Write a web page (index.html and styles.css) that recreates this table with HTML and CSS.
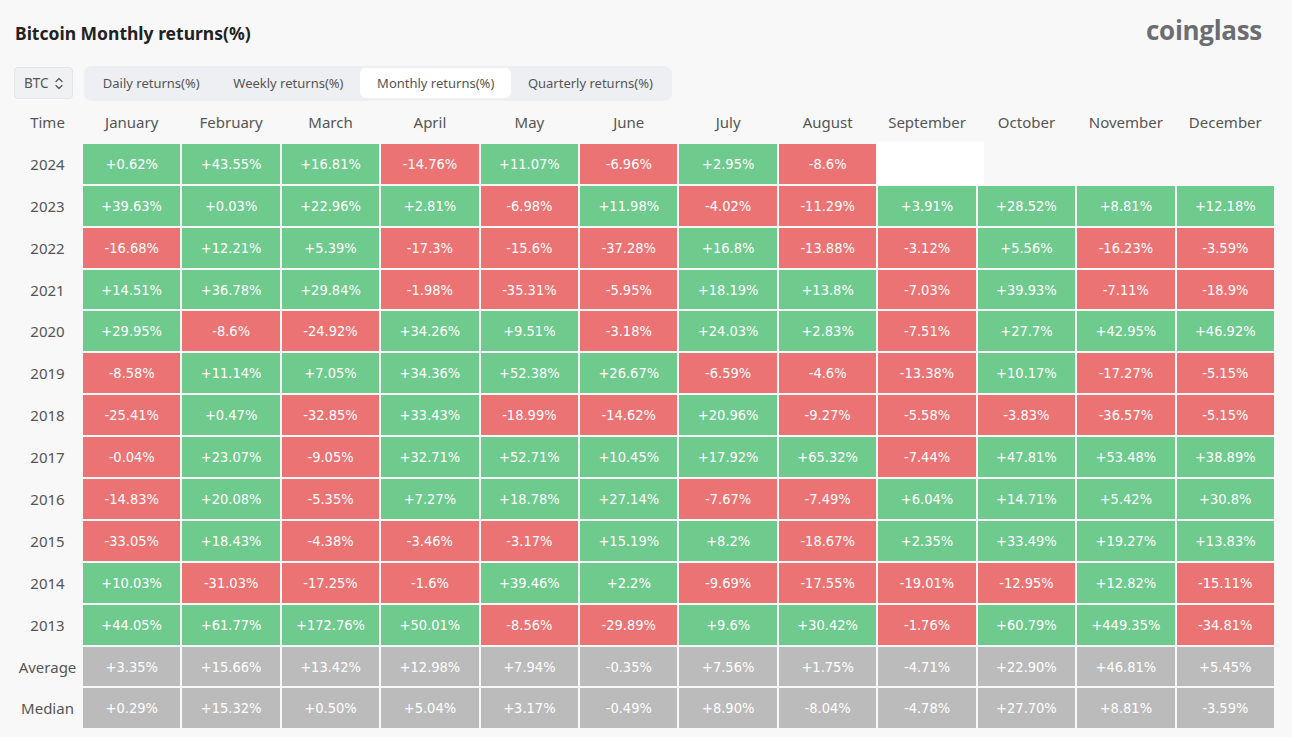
FILE: index.html
```html
<!DOCTYPE html>
<html lang="en">
<head>
<meta charset="utf-8">
<title>Bitcoin Monthly returns(%)</title>
<link rel="stylesheet" href="styles.css">
</head>
<body>
<div class="page">
  <header class="top">
    <h1 class="title">Bitcoin Monthly returns(%)</h1>
    <div class="logo">coinglass</div>
  </header>
  <div class="controls">
    <div class="select">BTC
      <svg class="chev" width="8" height="13" viewBox="0 0 8 13"><path d="M1 4.5 4 1.5 7 4.5M1 8.5 4 11.5 7 8.5" fill="none" stroke="#555" stroke-width="1.2" stroke-linecap="round" stroke-linejoin="round"/></svg>
    </div>
    <div class="tabs">
      <div class="tab">Daily returns(%)</div>
      <div class="tab">Weekly returns(%)</div>
      <div class="tab active">Monthly returns(%)</div>
      <div class="tab">Quarterly returns(%)</div>
    </div>
  </div>
  <div class="grid">
    <div class="hd">Time</div><div class="hd">January</div><div class="hd">February</div><div class="hd">March</div><div class="hd">April</div><div class="hd">May</div><div class="hd">June</div><div class="hd">July</div><div class="hd">August</div><div class="hd">September</div><div class="hd">October</div><div class="hd">November</div><div class="hd">December</div>

    <div class="lbl">2024</div><div class="c up">+0.62%</div><div class="c up">+43.55%</div><div class="c up">+16.81%</div><div class="c dn">-14.76%</div><div class="c up">+11.07%</div><div class="c dn">-6.96%</div><div class="c up">+2.95%</div><div class="c dn">-8.6%</div><div class="c blank"></div><div class="c none"></div><div class="c none"></div><div class="c none"></div>

    <div class="lbl">2023</div><div class="c up">+39.63%</div><div class="c up">+0.03%</div><div class="c up">+22.96%</div><div class="c up">+2.81%</div><div class="c dn">-6.98%</div><div class="c up">+11.98%</div><div class="c dn">-4.02%</div><div class="c dn">-11.29%</div><div class="c up">+3.91%</div><div class="c up">+28.52%</div><div class="c up">+8.81%</div><div class="c up">+12.18%</div>

    <div class="lbl">2022</div><div class="c dn">-16.68%</div><div class="c up">+12.21%</div><div class="c up">+5.39%</div><div class="c dn">-17.3%</div><div class="c dn">-15.6%</div><div class="c dn">-37.28%</div><div class="c up">+16.8%</div><div class="c dn">-13.88%</div><div class="c dn">-3.12%</div><div class="c up">+5.56%</div><div class="c dn">-16.23%</div><div class="c dn">-3.59%</div>

    <div class="lbl">2021</div><div class="c up">+14.51%</div><div class="c up">+36.78%</div><div class="c up">+29.84%</div><div class="c dn">-1.98%</div><div class="c dn">-35.31%</div><div class="c dn">-5.95%</div><div class="c up">+18.19%</div><div class="c up">+13.8%</div><div class="c dn">-7.03%</div><div class="c up">+39.93%</div><div class="c dn">-7.11%</div><div class="c dn">-18.9%</div>

    <div class="lbl">2020</div><div class="c up">+29.95%</div><div class="c dn">-8.6%</div><div class="c dn">-24.92%</div><div class="c up">+34.26%</div><div class="c up">+9.51%</div><div class="c dn">-3.18%</div><div class="c up">+24.03%</div><div class="c up">+2.83%</div><div class="c dn">-7.51%</div><div class="c up">+27.7%</div><div class="c up">+42.95%</div><div class="c up">+46.92%</div>

    <div class="lbl">2019</div><div class="c dn">-8.58%</div><div class="c up">+11.14%</div><div class="c up">+7.05%</div><div class="c up">+34.36%</div><div class="c up">+52.38%</div><div class="c up">+26.67%</div><div class="c dn">-6.59%</div><div class="c dn">-4.6%</div><div class="c dn">-13.38%</div><div class="c up">+10.17%</div><div class="c dn">-17.27%</div><div class="c dn">-5.15%</div>

    <div class="lbl">2018</div><div class="c dn">-25.41%</div><div class="c up">+0.47%</div><div class="c dn">-32.85%</div><div class="c up">+33.43%</div><div class="c dn">-18.99%</div><div class="c dn">-14.62%</div><div class="c up">+20.96%</div><div class="c dn">-9.27%</div><div class="c dn">-5.58%</div><div class="c dn">-3.83%</div><div class="c dn">-36.57%</div><div class="c dn">-5.15%</div>

    <div class="lbl">2017</div><div class="c dn">-0.04%</div><div class="c up">+23.07%</div><div class="c dn">-9.05%</div><div class="c up">+32.71%</div><div class="c up">+52.71%</div><div class="c up">+10.45%</div><div class="c up">+17.92%</div><div class="c up">+65.32%</div><div class="c dn">-7.44%</div><div class="c up">+47.81%</div><div class="c up">+53.48%</div><div class="c up">+38.89%</div>

    <div class="lbl">2016</div><div class="c dn">-14.83%</div><div class="c up">+20.08%</div><div class="c dn">-5.35%</div><div class="c up">+7.27%</div><div class="c up">+18.78%</div><div class="c up">+27.14%</div><div class="c dn">-7.67%</div><div class="c dn">-7.49%</div><div class="c up">+6.04%</div><div class="c up">+14.71%</div><div class="c up">+5.42%</div><div class="c up">+30.8%</div>

    <div class="lbl">2015</div><div class="c dn">-33.05%</div><div class="c up">+18.43%</div><div class="c dn">-4.38%</div><div class="c dn">-3.46%</div><div class="c dn">-3.17%</div><div class="c up">+15.19%</div><div class="c up">+8.2%</div><div class="c dn">-18.67%</div><div class="c up">+2.35%</div><div class="c up">+33.49%</div><div class="c up">+19.27%</div><div class="c up">+13.83%</div>

    <div class="lbl">2014</div><div class="c up">+10.03%</div><div class="c dn">-31.03%</div><div class="c dn">-17.25%</div><div class="c dn">-1.6%</div><div class="c up">+39.46%</div><div class="c up">+2.2%</div><div class="c dn">-9.69%</div><div class="c dn">-17.55%</div><div class="c dn">-19.01%</div><div class="c dn">-12.95%</div><div class="c up">+12.82%</div><div class="c dn">-15.11%</div>

    <div class="lbl">2013</div><div class="c up">+44.05%</div><div class="c up">+61.77%</div><div class="c up">+172.76%</div><div class="c up">+50.01%</div><div class="c dn">-8.56%</div><div class="c dn">-29.89%</div><div class="c up">+9.6%</div><div class="c up">+30.42%</div><div class="c dn">-1.76%</div><div class="c up">+60.79%</div><div class="c up">+449.35%</div><div class="c dn">-34.81%</div>

    <div class="lbl">Average</div><div class="c avg">+3.35%</div><div class="c avg">+15.66%</div><div class="c avg">+13.42%</div><div class="c avg">+12.98%</div><div class="c avg">+7.94%</div><div class="c avg">-0.35%</div><div class="c avg">+7.56%</div><div class="c avg">+1.75%</div><div class="c avg">-4.71%</div><div class="c avg">+22.90%</div><div class="c avg">+46.81%</div><div class="c avg">+5.45%</div>

    <div class="lbl">Median</div><div class="c avg">+0.29%</div><div class="c avg">+15.32%</div><div class="c avg">+0.50%</div><div class="c avg">+5.04%</div><div class="c avg">+3.17%</div><div class="c avg">-0.49%</div><div class="c avg">+8.90%</div><div class="c avg">-8.04%</div><div class="c avg">-4.78%</div><div class="c avg">+27.70%</div><div class="c avg">+8.81%</div><div class="c avg">-3.59%</div>
  </div>
</div>
</body>
</html>
```
FILE: styles.css
```css
html, body {
  margin: 0;
  padding: 0;
  background: #f8f8f8;
}
body {
  font-family: "Noto Sans", "Open Sans", sans-serif;
  color: #333;
}
.page {
  width: 1292px;
  height: 737px;
  overflow: hidden;
  box-sizing: border-box;
  padding: 0 18px 0 14px;
}
.top {
  display: flex;
  justify-content: space-between;
  align-items: center;
  height: 66px;
}
.title {
  margin: 0;
  font-size: 17.5px;
  font-weight: 700;
  color: #222;
  padding-left: 1px;
}
.logo {
  font-family: "Open Sans", sans-serif;
  font-weight: 700;
  font-size: 26px;
  color: #6c6d71;
  letter-spacing: -0.3px;
  padding-right: 12px;
  padding-bottom: 6px;
}
.controls {
  display: flex;
  align-items: center;
  gap: 11px;
  height: 34px;
}
.select {
  display: flex;
  align-items: center;
  gap: 6px;
  box-sizing: border-box;
  width: 59px;
  height: 32px;
  padding-left: 9px;
  background: #f0f1f3;
  border: 1px solid #e4e5e8;
  border-radius: 4px;
  font-size: 13.5px;
  color: #555;
}
.chev { display: block; }
.tabs {
  display: flex;
  align-items: center;
  box-sizing: border-box;
  height: 34px;
  padding: 2px;
  background: #eeeff2;
  border-radius: 8px;
  box-shadow: 0 1px 1px rgba(0,0,0,0.04);
}
.tab {
  height: 30px;
  display: flex;
  align-items: center;
  padding: 0 16.8px;
  font-size: 13px;
  color: #555;
  border-radius: 6px;
}
.tab.active {
  background: #fff;
}
.grid {
  display: grid;
  grid-template-columns: 67px repeat(12, 1fr);
  grid-auto-rows: 39.9px;
  gap: 2px;
  margin-top: 2px;
}
.hd, .lbl {
  display: flex;
  align-items: center;
  justify-content: center;
  font-size: 15px;
  color: #555;
}
.c {
  display: flex;
  align-items: center;
  justify-content: center;
  font-family: "DejaVu Sans Condensed", "DejaVu Sans", sans-serif;
  font-size: 14.5px;
  color: #fff;
}
.up { background: #6fca8e; }
.dn { background: #eb7373; }
.avg { background: #bbbbbb; }
.none { background: transparent; }
.blank {
  position: relative;
}
.blank::before {
  content: "";
  position: absolute;
  top: -2px;
  left: 0;
  right: -8px;
  bottom: -1px;
  background: #fff;
}
```
